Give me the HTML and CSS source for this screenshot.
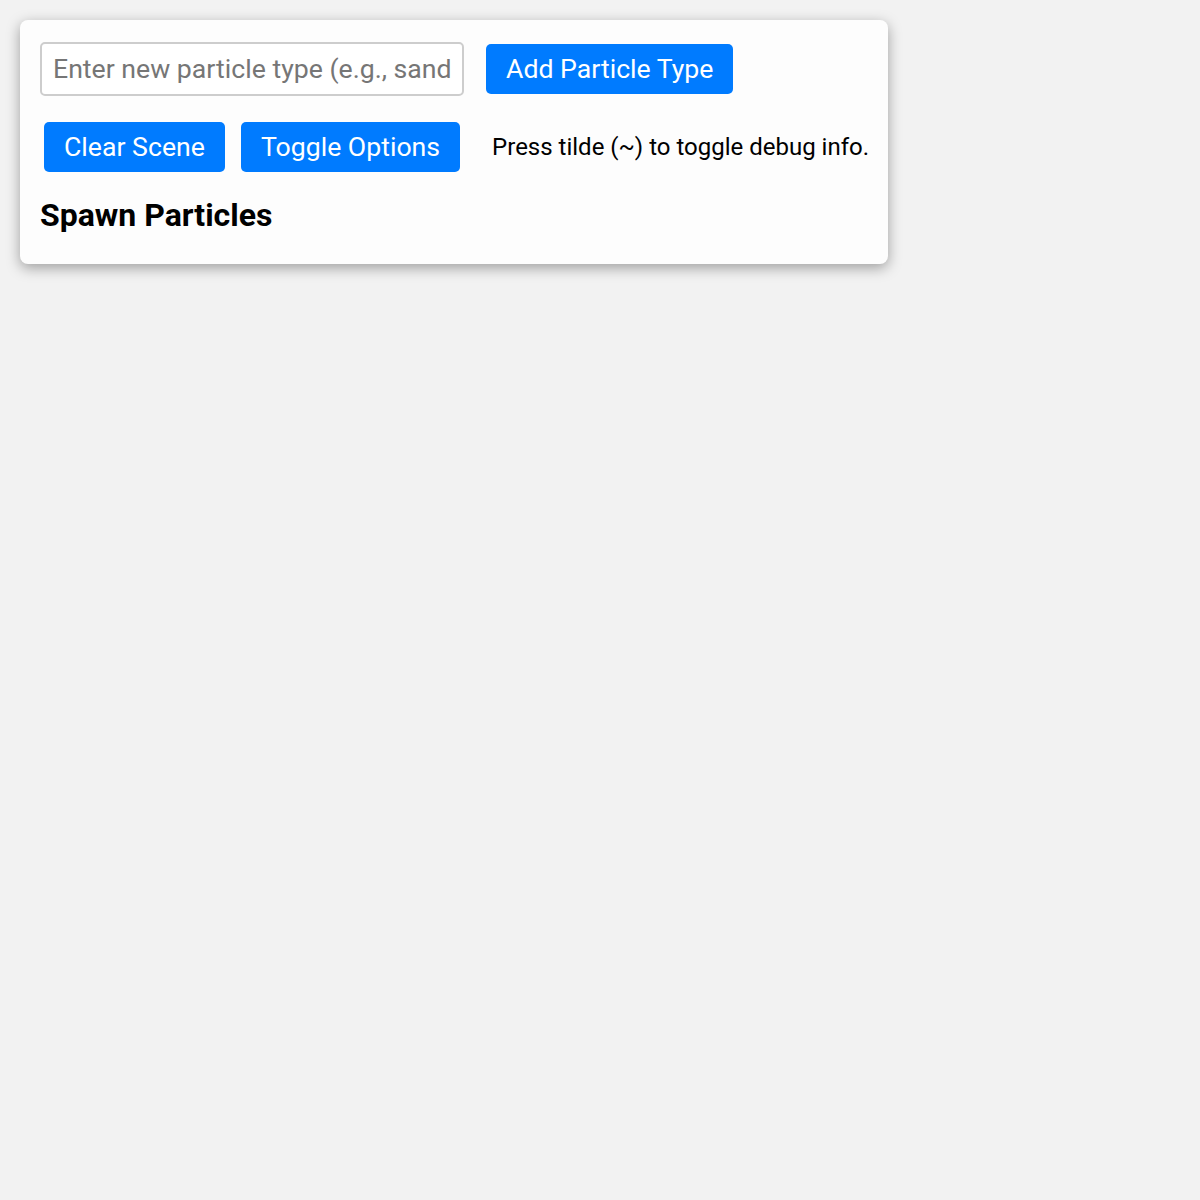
FILE: index.html
```html
<!DOCTYPE html>
<html lang="en">
<head>
    <meta charset="UTF-8">
    <meta name="viewport" content="width=device-width, initial-scale=1.0">
    <title>Particle Sandbox</title>
    <link rel="stylesheet" href="styles.css">
</head>
<body>
    <div class="ui-panel" id="ui-panel">
        <div class="add-row">
            <input type="text" id="new-type" class="type-input" placeholder="Enter new particle type (e.g., sand, water)">
            <button id="add-type" class="add-button">Add Particle Type</button>
        </div>
        <div class="action-row">
            <button id="clear">Clear Scene</button>
            <button id="toggle-options">Toggle Options</button>
            <span class="debug-hint">Press tilde (~) to toggle debug info.</span>
        </div>
        <h2 class="spawn-title">Spawn Particles</h2>
    </div>
</body>
</html>
```

FILE: styles.css
```css
body {
    font-family: Roboto, "Noto Sans", Arial, sans-serif;
    margin: 0;
    padding: 20px;
    background: #f2f2f2;
    color: #000;
}
.ui-panel {
    width: 828px;
    padding: 20px;
    background: #fdfdfd;
    border-radius: 8px;
    box-shadow: 0 4px 14px rgba(0, 0, 0, 0.35);
}
.add-row {
    display: flex;
    align-items: center;
    gap: 22px;
    margin-top: 2px;
}
.type-input {
    width: 424px;
    height: 54px;
    box-sizing: border-box;
    padding: 0 11px;
    border: 2px solid #cdcdcd;
    border-radius: 5px;
    font-family: inherit;
    font-size: 26.67px;
    color: #000;
    background: #fff;
    outline: none;
}
.type-input::placeholder {
    color: #767676;
}
button {
    flex-shrink: 0;
    height: 50px;
    padding: 0 20px;
    border: none;
    border-radius: 5px;
    background: #007bff;
    color: #fff;
    font-family: inherit;
    font-size: 26.67px;
    white-space: nowrap;
    cursor: pointer;
}
button:hover {
    background: #0069d9;
}
.action-row {
    display: flex;
    align-items: center;
    gap: 16px;
    margin-top: 26px;
    padding-left: 4px;
}
.debug-hint {
    margin-left: 16px;
    font-size: 24px;
    white-space: nowrap;
}
.spawn-title {
    margin: 23.5px 0 10px;
    font-size: 32px;
    font-weight: bold;
}
```
